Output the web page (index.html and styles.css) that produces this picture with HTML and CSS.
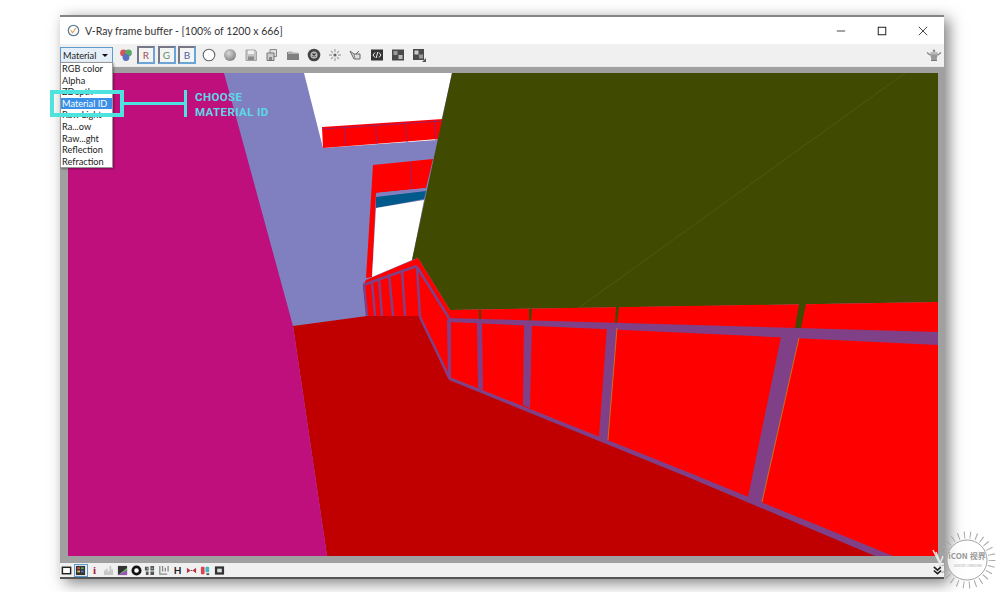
FILE: index.html
```html
<!DOCTYPE html>
<html lang="en">
<head>
<meta charset="utf-8">
<title>V-Ray frame buffer</title>
<link rel="stylesheet" href="styles.css">
</head>
<body>
<main class="window">
  <header class="titlebar">
    <svg class="app-icon" viewBox="0 0 14 14"><circle cx="7" cy="7" r="5.6" fill="#fff" stroke="#5f7f96" stroke-width="1.4"/><path d="M4 6.5l2 3 3.6-5.5" fill="none" stroke="#e0a050" stroke-width="1.2"/></svg>
    <span class="title">V-Ray frame buffer - [100% of 1200 x 666]</span>
    <div class="controls">
      <svg class="ctl" viewBox="0 0 12 12"><path d="M1 6h10" stroke="#222" fill="none"/></svg>
      <svg class="ctl" viewBox="0 0 12 12"><rect x="1.5" y="1.5" width="9" height="9" fill="none" stroke="#222" stroke-width="1.2"/></svg>
      <svg class="ctl" viewBox="0 0 12 12"><path d="M1 1l10 10M11 1L1 11" stroke="#222" fill="none"/></svg>
    </div>
  </header>

  <div class="toolbar">
    <div class="picker">
      <div class="select"><span>Material</span><i class="caret"></i></div>
      <ul class="menu">
        <li>RGB color</li>
        <li>Alpha</li>
        <li>ZDepth</li>
        <li class="active">Material ID</li>
        <li>Raw Light</li>
        <li>Ra...ow</li>
        <li>Raw...ght</li>
        <li>Reflection</li>
        <li>Refraction</li>
      </ul>
    </div>
    <span class="tool"><svg viewBox="0 0 14 14"><circle cx="4.5" cy="5" r="3.4" fill="#d0555f"/><circle cx="9.5" cy="5" r="3.4" fill="#58a868"/><circle cx="7" cy="9.5" r="3.4" fill="#5a70c0"/></svg></span>
    <div class="channels">
      <span class="chan r">R</span>
      <span class="chan g">G</span>
      <span class="chan b">B</span>
    </div>
    <span class="tool"><svg viewBox="0 0 14 14"><circle cx="7" cy="7" r="5.8" fill="#fff" stroke="#666" stroke-width="1.1"/></svg></span>
    <span class="tool"><svg viewBox="0 0 14 14"><defs><radialGradient id="sph" cx=".4" cy=".35" r=".7"><stop offset="0" stop-color="#d8d8d8"/><stop offset="1" stop-color="#808080"/></radialGradient></defs><circle cx="7" cy="7" r="6" fill="url(#sph)"/></svg></span>
    <span class="tool"><svg viewBox="0 0 14 14"><path d="M2 2h9l1.500 1.500V12.500H2z" fill="#c4c4c4" stroke="#a5a5a5"/><rect x="4" y="2.500" width="6" height="3.500" fill="#f0f0f0"/><rect x="4" y="8.500" width="6" height="3.500" fill="#8a8a8a"/></svg></span>
    <span class="tool"><svg viewBox="0 0 14 14"><path d="M5 1.500h6.500v7H5z" fill="#ddd" stroke="#888"/><path d="M2 5h7v7.500H2z" fill="#ccc" stroke="#777"/><rect x="4" y="9" width="3" height="3" fill="#888"/></svg></span>
    <span class="tool"><svg viewBox="0 0 14 14"><path d="M1 4h4l1 1.500h7V12H1z" fill="#808080"/><path d="M2 3.500h4l1 1h5V6H2z" fill="#b0b0b0"/></svg></span>
    <span class="tool"><svg viewBox="0 0 14 14"><circle cx="7" cy="7" r="6.300" fill="#444"/><circle cx="7" cy="7" r="3.500" fill="#bbb"/><path d="M5.500 5.500l3 3M8.500 5.500l-3 3" stroke="#333" stroke-width="1.200"/></svg></span>
    <span class="tool"><svg viewBox="0 0 14 14"><path d="M7 1v3M7 10v3M1 7h3M10 7h3M3 3l2 2M9 9l2 2M11 3L9 5M5 9l-2 2" stroke="#aaa" stroke-width="1.300"/><circle cx="7" cy="7" r="1.600" fill="#666"/></svg></span>
    <span class="tool"><svg viewBox="0 0 14 14"><path d="M1 3l4 3h6v5H5z" fill="#ddd" stroke="#666"/><path d="M7 6l3-3" stroke="#666"/><path d="M5 6l1 5" stroke="#888"/></svg></span>
    <span class="tool"><svg viewBox="0 0 14 14"><rect x="1" y="1.500" width="12" height="11" fill="#333"/><path d="M5 4.500L3 7l2 2.500M9 4.500L11 7 9 9.500M7.800 4l-1.600 6" stroke="#eee" fill="none"/></svg></span>
    <span class="tool"><svg viewBox="0 0 14 14"><rect x="1" y="1.500" width="12" height="11" fill="#4a4a4a"/><rect x="2.500" y="3" width="4" height="4" fill="#999"/><rect x="7.500" y="7" width="4" height="4" fill="#bbb"/></svg></span>
    <span class="tool last"><svg viewBox="0 0 14 14"><rect x="1" y="1" width="11" height="11" fill="#4a4a4a"/><rect x="2.500" y="2.500" width="4" height="4" fill="#ccc"/><rect x="7" y="6.500" width="4" height="4" fill="#999"/><path d="M14 14h-4l4-4z" fill="#555"/></svg></span>
    <span class="tool teapot"><svg viewBox="0 0 16 14"><path d="M4 6h8l-1.500 5.500h-5z" fill="#999"/><ellipse cx="8" cy="5" rx="4" ry="1.600" fill="#bbb"/><circle cx="8" cy="2.800" r="1.200" fill="#888"/><path d="M4 7L1 4.500M12 7l3-2.500" stroke="#888" stroke-width="1.400"/><rect x="5" y="11.500" width="6" height="1.500" fill="#777"/></svg></span>
  </div>

  <div class="viewport">
    <svg class="render" viewBox="68 73 870 483" width="870" height="483">
      <rect class="periwinkle" x="68" y="73" width="870" height="483"/>
      <polygon class="white" points="304,73 452,73 437,140 323,148"/>
      <polygon class="red" points="322,127 443,119 438,139 323,148"/>
      <path class="seam" d="M322 129L443 121M344 126L346 146M375 124L377 144M405 122L407 142M435 120L436 140"/>
      <polygon class="red" points="373,165 433,159 426,188 376,193 372,277 366,278"/>
      <polygon class="periwinkle" points="376,193 426,188 426,192 376,197"/>
      <polygon class="blue" points="376,197 426,191 424,199 376,208"/>
      <polygon class="white" points="376,208 424,200 412,260 372,277"/>
      <path class="seam" d="M411 162L412 189"/>
      <polygon class="olive" points="452,73 938,73 938,302 700,306 450,310 418,258 412,260"/>
      <path class="olive-line" d="M580 307L905 73"/>

      <polygon class="floor" points="293,326 367,316 420,316 447,376 690,476 893,556 327,556"/>
      <polygon class="magenta" points="68,73 224,73 293,326 327,556 68,556"/>

      <polygon class="red" points="366,280 418,258 450,310 938,302 938,556 890,556 690,474 447,376 420,316 367,316 363,285"/>

      <polygon class="olive" points="479,310 481,310 481,319 479,319"/>
      <polygon class="olive" points="529,309 532,309 531,321 529,321"/>
      <polygon class="olive" points="616,307 619,307 617,324 615,324"/>
      <polygon class="olive" points="799,304 806,304 801,328 795,328"/>

      <path class="rail" d="M363 285L417 266M364 285L367 316M372 282L375 316M379 278L382 316M389 274L393 316M402 270L405 316M417 267L420 317M417 267L449 318M420 317L449 377"/>
      <polygon class="purple" points="447,318 938,332 938,345 690,333 449,322"/>
      <polygon class="purple" points="447,320 451,320 451,377 448,377"/>
      <polygon class="purple" points="477,322 482,322 483,390 478,388"/>
      <polygon class="purple" points="524,322 532,322 530,408 523,405"/>
      <polygon class="purple" points="607,326 617,326 608,442 599,437"/>
      <polygon class="purple" points="781,337 799,337 762,503 748,497"/>
      <path class="orange" d="M799 338L762 502M617 328L608 440"/>
      <polygon class="purple" points="447,376 690,473 893,556 875,556 690,478 449,380"/>
    </svg>
  </div>

  <footer class="statusbar">
    <span class="stat"><svg viewBox="0 0 12 12"><rect x="1.500" y="2.500" width="9" height="7" fill="#fff" stroke="#222" stroke-width="1.600"/></svg></span>
    <span class="stat on"><svg viewBox="0 0 12 12"><rect x="1" y="1" width="10" height="10" fill="#333"/><rect x="2.500" y="2.500" width="3" height="2" fill="#e05050"/><rect x="6.500" y="2.500" width="3" height="2" fill="#50a060"/><rect x="2.500" y="6" width="3" height="2" fill="#e0c050"/><rect x="6.500" y="6" width="3" height="2" fill="#5070c0"/></svg></span>
    <span class="stat info">i</span>
    <span class="stat"><svg viewBox="0 0 12 12"><path d="M1 11V6h2V4h2v3h2V1h2v4h2v6z" fill="#c8c8c8"/></svg></span>
    <span class="stat"><svg viewBox="0 0 12 12"><rect x="1" y="1" width="10" height="10" fill="#333"/><path d="M1 11L11 3v3L4 11z" fill="#60b060"/><path d="M1 11L11 6v5z" fill="#a050c0"/></svg></span>
    <span class="stat"><svg viewBox="0 0 12 12"><circle cx="6" cy="6" r="4" fill="#fff" stroke="#111" stroke-width="3"/></svg></span>
    <span class="stat"><svg viewBox="0 0 12 12"><path d="M1 2h4v4H1zM7 1h4v5H7zM2 7h3v4H2zM7 7h4v4H7z" fill="#555"/><path d="M3 3h1v2H3zM8 3h2v1H8z" fill="#9cc"/></svg></span>
    <span class="stat"><svg viewBox="0 0 12 12"><path d="M2 1v9h8M5 1v6M8 3v4M11 1v6" stroke="#888" stroke-width="1.400" fill="none"/></svg></span>
    <span class="stat hist">H</span>
    <span class="stat"><svg viewBox="0 0 12 12"><path d="M1 3v6l4-3zM11 3v6L7 6z" fill="#c03040"/><path d="M5 6h2" stroke="#555"/></svg></span>
    <span class="stat"><svg viewBox="0 0 12 12"><rect x="1" y="2" width="4" height="8" rx="1" fill="#e04050"/><rect x="6" y="2" width="4" height="6" rx="1" fill="#40b8c8"/><rect x="7" y="9" width="3" height="2" fill="#555"/></svg></span>
    <span class="stat"><svg viewBox="0 0 12 12"><rect x="1" y="1.500" width="10" height="9" fill="#333"/><rect x="3.500" y="4" width="5" height="4" fill="#ddd"/></svg></span>
    <span class="stat more"><svg viewBox="0 0 12 12"><path d="M2 2l4 3.500L10 2M2 6l4 3.500L10 6" fill="none" stroke="#222" stroke-width="1.800"/></svg></span>
  </footer>

  <div class="note">
    <div class="note-box"></div>
    <div class="note-line"></div>
    <div class="note-bar"></div>
    <p class="note-text">CHOOSE<br>MATERIAL ID</p>
  </div>
</main>

<svg class="stamp" viewBox="0 0 75 72" width="75" height="72">
  <circle cx="42" cy="40" r="25" class="stamp-rays"/>
  <circle cx="42" cy="40" r="20" class="stamp-ring"/>
  <path class="stamp-mark" d="M8 30L15 44L18 36M11 32L17 48"/>
  <text x="42" y="39" class="stamp-a">iCON 视界</text>
  <text x="43" y="47" class="stamp-b">GOOD DESIGN</text>
</svg>
</body>
</html>
```

FILE: styles.css
```css
* { box-sizing: border-box; }

html, body { margin: 0; padding: 0; }

body {
  width: 1000px;
  height: 592px;
  overflow: hidden;
  background: #fff;
  font-family: Lato, "Noto Sans", sans-serif;
  position: relative;
}

.window {
  position: relative;
  width: 884px;
  height: 564px;
  margin: 15px 0 0 60px;
  display: flex;
  flex-direction: column;
  border-top: 2px solid #858585;
  border-bottom: 2px solid #555;
  background: #f0f0f0;
  box-shadow: 5px 4px 14px rgba(0, 0, 0, .5);
}

.titlebar {
  height: 27px;
  flex: none;
  display: flex;
  align-items: center;
  padding-left: 7px;
  background: #fff;
}

.app-icon { width: 13px; height: 13px; flex: none; }

.title {
  margin-left: 5px;
  font-size: 10.500px;
  color: #333;
  white-space: nowrap;
}

.controls {
  margin-left: auto;
  display: flex;
  align-items: center;
  margin-right: 1px;
}

.ctl {
  width: 10px;
  height: 10px;
  margin-right: 15.500px;
  margin-left: 15.500px;
}

.toolbar {
  height: 22px;
  flex: none;
  display: flex;
  align-items: center;
  background: #f0f0f0;
}

.picker { position: relative; width: 53px; flex: none; }

.select {
  height: 16px;
  display: flex;
  align-items: center;
  padding: 0 4px 0 2px;
  border: 1px solid #5a9bd0;
  background: #e6eff7;
  font-size: 9.200px;
  color: #222;
}

.caret {
  margin-left: auto;
  border: 3px solid transparent;
  border-top: 3px solid #111;
  border-bottom: 0;
}

.menu {
  position: absolute;
  z-index: 3;
  top: 15px;
  left: 0;
  width: 53px;
  margin: 0;
  padding: 0;
  list-style: none;
  background: #fff;
  border: 1px solid #999;
  box-shadow: 1px 1px 2px rgba(0, 0, 0, .35);
}

.menu li {
  height: 11.600px;
  line-height: 11.600px;
  padding-left: 1px;
  font-size: 9.200px;
  color: #222;
  white-space: nowrap;
  overflow: hidden;
}

.menu .active { background: #3a8fe8; color: #fff; }

.tool {
  width: 21px;
  height: 16px;
  flex: none;
  display: flex;
  align-items: center;
  justify-content: center;
}

.tool svg { width: 14px; height: 14px; }

.picker + .tool { margin-left: 2px; }

.channels {
  display: flex;
  gap: 2.500px;
  flex: none;
  margin: 0 2px 0 1px;
}

.chan {
  width: 18px;
  height: 18px;
  display: flex;
  align-items: center;
  justify-content: center;
  font-size: 10px;
  background: #f4f4f4;
  border: 2px solid #778;
  border-right-color: #6aa5d5;
  border-bottom-color: #6aa5d5;
}

.r { color: #a05050; }
.g { color: #609070; }
.b { color: #5060a0; }

.teapot { margin-left: auto; margin-right: 0; }
.teapot svg { width: 16px; height: 14px; }

.viewport {
  flex: 1;
  min-height: 0;
  padding: 6px 6px 7px 8px;
  background: #a0a0a0;
  border-top: 1px solid #e8e8e8;
}

.render { display: block; }

.periwinkle { fill: #8080c0; }
.white { fill: #fff; }
.red { fill: #f00; }
.blue { fill: #005a8c; }
.olive { fill: #404a00; }
.floor { fill: #c00000; }
.magenta { fill: #bf0f7d; }
.purple { fill: #804088; }

.seam { fill: none; stroke: #a02060; stroke-width: 1; }
.olive-line { fill: none; stroke: #505a08; stroke-width: 1; }
.rail { fill: none; stroke: #804088; stroke-width: 2.500; }
.orange { fill: none; stroke: #c87020; stroke-width: 1; }

.statusbar {
  height: 14px;
  flex: none;
  display: flex;
  align-items: center;
  background: #f0f0f0;
}

.stat {
  width: 13.850px;
  height: 13px;
  flex: none;
  display: flex;
  align-items: center;
  justify-content: center;
  font-size: 10px;
  font-weight: 700;
}

.stat svg { width: 11px; height: 11px; }

.on { outline: 1px solid #5a9bd0; outline-offset: -1px; }

.info { color: #a02030; font-family: "Liberation Serif", serif; font-size: 11px; }
.hist { color: #222; }

.more { margin-left: auto; margin-right: 0; }

.note { position: absolute; inset: 0; pointer-events: none; z-index: 4; }

.note-box {
  position: absolute;
  left: -10px;
  top: 73px;
  width: 74px;
  height: 27px;
  border: 4px solid #4fe3df;
}

.note-line {
  position: absolute;
  left: 64px;
  top: 85px;
  width: 62px;
  height: 3px;
  background: #4fe3df;
}

.note-bar {
  position: absolute;
  left: 124px;
  top: 73px;
  width: 3px;
  height: 27px;
  background: #4fe3df;
}

.note-text {
  position: absolute;
  left: 135px;
  top: 73px;
  margin: 0;
  font-family: Roboto, sans-serif;
  font-size: 11.500px;
  font-weight: 700;
  line-height: 15px;
  letter-spacing: .4px;
  color: #5cd8e6;
  white-space: nowrap;
}

.stamp {
  position: absolute;
  left: 925px;
  top: 520px;
}

.stamp-rays {
  fill: none;
  stroke: #a8a8a8;
  stroke-width: 7;
  stroke-dasharray: 1 5;
}

.stamp-ring {
  fill: rgba(255, 255, 255, .75);
  stroke: #a5a5a5;
  stroke-width: 1;
}

.stamp-mark { fill: none; stroke: #e8e8e8; stroke-width: 1.500; }

.stamp-a {
  font-family: "Noto Sans CJK SC", "Noto Sans", sans-serif;
  font-size: 8px;
  font-weight: 700;
  fill: #999;
  text-anchor: middle;
}

.stamp-b {
  font-family: "Noto Sans", sans-serif;
  font-size: 4px;
  fill: #aaa;
  text-anchor: middle;
}
```
